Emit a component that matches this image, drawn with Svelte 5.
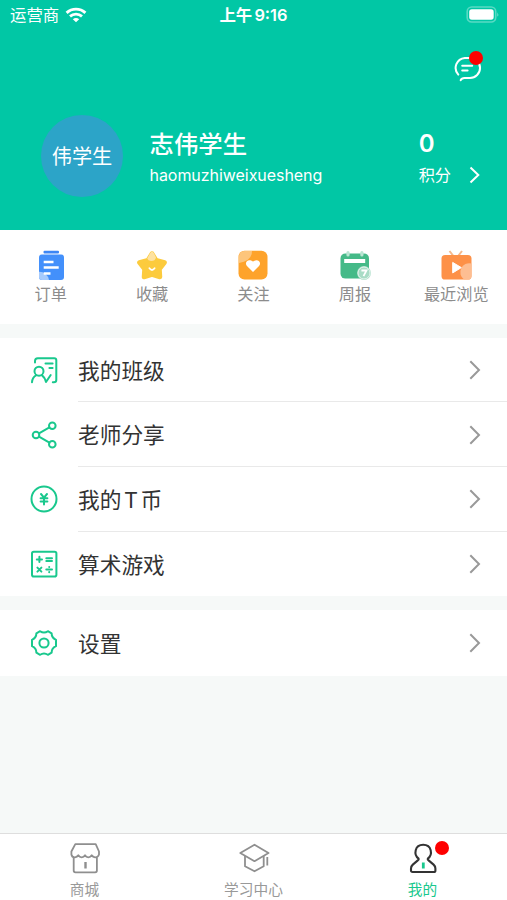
<script lang="ts">
  type Row = { id: string; label: string };

  const shortcuts: Row[] = [
    { id: 'order', label: '订单' },
    { id: 'star', label: '收藏' },
    { id: 'follow', label: '关注' },
    { id: 'weekly', label: '周报' },
    { id: 'recent', label: '最近浏览' },
  ];

  const groups: Row[][] = [
    [
      { id: 'class', label: '我的班级' },
      { id: 'share', label: '老师分享' },
      { id: 'coin', label: '我的 T 币' },
      { id: 'game', label: '算术游戏' },
    ],
    [{ id: 'settings', label: '设置' }],
  ];

  const tabs: Row[] = [
    { id: 'shop', label: '商城' },
    { id: 'study', label: '学习中心' },
    { id: 'me', label: '我的' },
  ];

  let activeTab = $state('me');
</script>

<div class="app">
  <header class="header">
    <div class="status">
      <div class="carrier">
        <span>运营商</span>
        <svg width="22" height="16" viewBox="0 0 22 16" fill="none" stroke="#fff" stroke-width="2.9">
          <path d="M1.6 5.9C6.9 .9 15.1 .9 20.4 5.9" />
          <path d="M5 9.4C8.4 6.4 13.6 6.4 17 9.4" />
          <path d="M11 15.2L7.8 12.2C9.6 10.6 12.4 10.6 14.2 12.2Z" fill="#fff" stroke="none" />
        </svg>
      </div>
      <div class="time">上午 9:16</div>
      <svg class="battery" width="34" height="17" viewBox="0 0 34 17">
        <rect x="1.2" y="1" width="28.5" height="15" rx="4.5" fill="none" stroke="#fff" stroke-opacity=".35" stroke-width="1.6" />
        <rect x="3.2" y="3.3" width="24.5" height="10.4" rx="2.6" fill="#fff" />
        <path d="M31.4 6.2Q33.2 8.5 31.4 10.8Z" fill="#fff" fill-opacity=".5" />
      </svg>
    </div>

    <button class="message" aria-label="消息">
      <svg width="30" height="28" viewBox="0 0 30 28" fill="none" stroke="#fff" stroke-width="2" stroke-linecap="round">
        <path d="M5.3 20.6A10 10 0 0 1 11.8 3.9H17A10 10 0 0 1 17 24H11.5Q8.6 24 7.7 26.2" />
        <path d="M9.2 11.7H19.2M9.2 16.6H14.6" />
      </svg>
      <i class="dot"></i>
    </button>

    <div class="profile">
      <div class="avatar">伟学生</div>
      <div class="who">
        <h1>志伟学生</h1>
        <p>haomuzhiweixuesheng</p>
      </div>
      <div class="points">
        <strong>0</strong>
        <span>积分</span>
      </div>
      <svg class="go" width="12" height="18" viewBox="0 0 12 18" fill="none" stroke="#fff" stroke-width="2">
        <path d="M1.5 1.5L9.3 9L1.5 16.5" />
      </svg>
    </div>
  </header>

  <nav class="shortcuts">
    {#each shortcuts as item}
      <button class="shortcut">
        <svg width="32" height="30" viewBox="0 0 32 30">
          {#if item.id === 'order'}
            <rect x="8.5" y=".7" width="15.5" height="2.8" rx="1" fill="#3c86f5" />
            <rect x="4" y="4.6" width="25" height="25.4" rx="3" fill="#4390fb" />
            <path d="M4 21.8A9.8 9.8 0 0 1 14 30H7Q4 30 4 27Z" fill="#a7cbfd" />
            <path d="M8.7 12H18.5M8.7 17.6H23.7M8.7 23.4H15.5" stroke="#fff" stroke-width="2.5" />
          {:else if item.id === 'star'}
            <path d="M16 3.5L20.2 10.2L28.6 12.5L23.5 19L24 27L16 24.5L8 27L8.5 19L3.4 12.5L11.8 10.2Z" fill="#fccb3d" stroke="#fccb3d" stroke-width="4.5" stroke-linejoin="round" />
            <path d="M11.2 8.6L14.1 3.2Q16 .4 17.9 3.2L20 7.5Q19 11.2 15 11Q12 10.9 11.2 8.6Z" fill="#fee2a0" />
            <path d="M13.4 18.3Q16 21.7 18.6 18.3" fill="none" stroke="#fff" stroke-width="1.8" stroke-linecap="round" />
          {:else if item.id === 'follow'}
            <rect x="1.5" y=".7" width="29" height="28.8" rx="6" fill="#fea32b" />
            <path d="M2 13V7Q2 1 8 1H15Q15 11 2 13Z" fill="#fdc57b" />
            <path d="M16 22L10.2 16.3C6.8 12.8 11 7.6 16 11.6C21 7.6 25.2 12.8 21.8 16.3Z" fill="#fff" />
          {:else if item.id === 'weekly'}
            <rect x="1.5" y="3.4" width="28.5" height="25.2" rx="5" fill="#45ba88" />
            <rect x="5.2" y="9" width="21" height="4" fill="#fff" />
            <path d="M9 2.6V5M22.9 2.6V5" stroke="#b9e5d2" stroke-width="3.2" stroke-linecap="round" />
            <circle cx="25" cy="23" r="6.9" fill="#a9dcc6" />
            <circle cx="25" cy="23" r="6" fill="none" stroke="#e5f5ee" stroke-width="1" />
            <path d="M22.4 20.5H27.5L24.5 26.2" fill="none" stroke="#fff" stroke-width="1.8" />
          {:else}
            <path d="M9.5 1L13 5.5M22 1L18.5 5.5" stroke="#f5b98b" stroke-width="2" />
            <rect x="1.5" y="5" width="30" height="24.5" rx="3.6" fill="#fd9148" />
            <path d="M31.5 13.5A9 9 0 0 0 24 29.5H28Q31.5 29.5 31.5 26Z" fill="#fdbe92" />
            <path d="M12.7 12.4V22.9L21.3 17.6Z" fill="#fff" stroke="#fff" stroke-linejoin="round" />
          {/if}
        </svg>
        <span>{item.label}</span>
      </button>
    {/each}
  </nav>

  {#each groups as group}
    <ul class="group">
      {#each group as item}
        <li class="row">
          <svg class="icon" width="28" height="28" viewBox="0 0 28 28" fill="none" stroke="#19c88d" stroke-width="2" stroke-linecap="round" stroke-linejoin="round">
            {#if item.id === 'class'}
              <path d="M5 6.6V5Q5 2.2 7.8 2.2H24.3Q26.3 2.2 26.3 4.2V24Q26.3 26.3 23.8 26.3H22.8" />
              <path d="M15.5 7.4H22.6M19.4 12H22.6" />
              <circle cx="9" cy="15.2" r="4.5" />
              <path d="M2 26.3Q2.2 21.5 6 19.3M12 19.3Q14.6 21 16 26L20.7 19" />
            {:else if item.id === 'share'}
              <circle cx="6" cy="14" r="3.3" />
              <circle cx="22.3" cy="4.8" r="3.3" />
              <circle cx="22.3" cy="23.3" r="3.3" />
              <path d="M9 12.3L19.4 6.4M9 15.7L19.4 21.7" />
            {:else if item.id === 'coin'}
              <circle cx="14" cy="14" r="12.5" />
              <path d="M11 9L14 12.7L17 9M10.6 13.3H17.4M10.6 16.5H17.4M14 12.7V19.5" />
            {:else if item.id === 'game'}
              <rect x="2" y="1.8" width="24.4" height="24.8" rx="1.8" />
              <path d="M6.8 9.4H12M9.4 6.8V12M16.3 8.2H22M16.3 11H22M7.4 17.6L11.4 21.6M11.4 17.6L7.4 21.6M16.3 19.6H22" />
              <path d="M19.2 17V17.1M19.2 22.1V22.2" />
            {:else}
              <path d="M10.1 2.2Q14 4.9 17.9 2.2L21.6 4.3Q21.6 8.9 26 10.8V17.2Q21.6 19.1 21.6 23.7L17.9 25.8Q14 23.1 10.1 25.8L6.4 23.7Q6.4 19.1 2 17.2V10.8Q6.4 8.9 6.4 4.3Z" />
              <circle cx="14" cy="14" r="4.6" />
            {/if}
          </svg>
          <div class="cell">
            <span>{item.label}</span>
            <svg width="12" height="20" viewBox="0 0 12 20" fill="none" stroke="#999" stroke-width="2">
              <path d="M1.3 1.2L10 10L1.3 18.8" />
            </svg>
          </div>
        </li>
      {/each}
    </ul>
  {/each}

  <nav class="tabbar">
    {#each tabs as tab}
      <button class="tab" class:active={activeTab === tab.id} onclick={() => (activeTab = tab.id)}>
        <svg width="32" height="32" viewBox="0 0 32 32" fill="none" stroke="#8f8f8f" stroke-width="1.8" stroke-linejoin="round">
          {#if tab.id === 'shop'}
            <path d="M6.3 2.2H26.7L30 9.5V12.5Q29 15.5 26 15.3Q23.8 15.2 22.7 13.3Q21.5 15.3 19.3 15.3Q17.2 15.3 16 13.3Q14.8 15.3 12.7 15.3Q10.5 15.3 9.3 13.3Q8.2 15.2 6 15.3Q3 15.5 2.4 12.5V9.5Z" />
            <path d="M4.7 15.3V28.6Q4.7 30.3 6.4 30.3H26.2Q27.9 30.3 27.9 28.6V15.3" />
            <path d="M16.5 20V26.5" stroke-width="2.4" />
          {:else if tab.id === 'study'}
            <path d="M16.5 2.7L30.5 11L16.5 19.2L2.3 11Z" />
            <path d="M7 14V24.2L16.5 29.3L25.7 24.2V14M29.3 15V23.5" />
          {:else}
            <g stroke="#333" stroke-width="2.1">
              <path d="M11.6 16.6C6.4 12.6 7.6 2.7 16.2 2.7C24.8 2.7 26 12.6 20.8 16.6Q20.4 17.6 21.6 18.4L26.6 22.6Q28.4 24.2 28.4 26.5V28.4Q28.4 30 26.8 30H5.6Q4 30 4 28.4V26.5Q4 24.2 5.8 22.6L10.8 18.4Q12 17.6 11.6 16.6Z" />
            </g>
            <path d="M16.3 20.5V26.5" stroke="#19c88d" stroke-width="2.8" />
          {/if}
        </svg>
        <span>{tab.label}</span>
        {#if tab.id === 'me'}
          <i class="dot"></i>
        {/if}
      </button>
    {/each}
  </nav>
</div>

<style>
  :global(body) {
    background: #f6f9f8;
  }

  .app {
    display: flex;
    flex-direction: column;
    height: 900px;
    overflow: hidden;
    font-family: Inter, 'Noto Sans CJK SC', sans-serif;
    color: #333;
  }

  button {
    border: 0;
    padding: 0;
    background: none;
    font: inherit;
    color: inherit;
    cursor: pointer;
  }

  svg {
    display: block;
    flex: none;
  }

  .header {
    height: 230px;
    flex: none;
    display: flex;
    flex-direction: column;
    background: #01c7a5;
    color: #fff;
  }

  .status {
    display: grid;
    grid-template-columns: 1fr auto 1fr;
    align-items: center;
    height: 30px;
    padding: 0 7px 0 10px;
    font-size: 16.4px;
    line-height: 30px;
  }

  .carrier {
    display: flex;
    align-items: center;
    gap: 6px;
  }

  .time {
    font-weight: 600;
    word-spacing: -2px;
    margin-right: 3px;
  }

  .battery {
    justify-self: end;
    margin-top: -2px;
  }

  .message {
    position: relative;
    align-self: flex-end;
    margin: 24px 24px 0 0;
  }

  .dot {
    position: absolute;
    width: 14px;
    height: 14px;
    border-radius: 50%;
    background: #fe0000;
  }

  .message .dot {
    top: -3px;
    right: 0;
  }

  .profile {
    display: flex;
    align-items: center;
    margin-top: 33px;
    padding: 0 26px 0 41px;
  }

  .avatar {
    width: 82px;
    height: 82px;
    flex: none;
    border-radius: 50%;
    background: #2ca4c8;
    font-size: 20.2px;
    line-height: 84px;
    text-align: center;
  }

  .who {
    flex: 1;
    margin-left: 26.5px;
    padding-top: 3px;
  }

  h1,
  p {
    margin: 0;
  }

  h1 {
    font-size: 24.4px;
    font-weight: 500;
    line-height: 34px;
  }

  p {
    font-size: 16px;
    line-height: 28px;
    letter-spacing: -0.05px;
  }

  .points {
    display: flex;
    flex-direction: column;
    padding-top: 3px;
    font-size: 16.2px;
    line-height: 28px;
  }

  .points strong {
    font-size: 24px;
    font-weight: 600;
    line-height: 34px;
  }

  .go {
    margin: 38px 0 0 18px;
  }

  .shortcuts {
    display: grid;
    grid-template-columns: repeat(5, 1fr);
    height: 94px;
    flex: none;
    background: #fff;
  }

  .shortcut {
    display: flex;
    flex-direction: column;
    align-items: center;
    padding-top: 20px;
    font-size: 16.2px;
    line-height: 28px;
    color: #8c8c8c;
    white-space: nowrap;
  }

  .group {
    margin: 13.7px 0 0;
    padding: 0;
    list-style: none;
    background: #fff;
  }

  .row {
    display: flex;
    align-items: center;
    height: 64.7px;
    padding-left: 30px;
  }

  .row:only-child {
    height: 66px;
  }

  .cell {
    display: flex;
    flex: 1;
    align-items: center;
    justify-content: space-between;
    align-self: stretch;
    box-sizing: border-box;
    margin-left: 20px;
    padding: 1px 26px 0 0;
    border-bottom: 1px solid #e9e9e9;
    font-size: 21.7px;
    word-spacing: -3.5px;
  }

  .row:last-child .cell {
    border-bottom-color: transparent;
  }

  .cell span {
    margin-top: -2px;
  }

  .tabbar {
    display: grid;
    grid-template-columns: repeat(3, 1fr);
    height: 67px;
    box-sizing: border-box;
    flex: none;
    margin-top: auto;
    border-top: 1.5px solid #dedede;
    background: #fff;
  }

  .tab {
    position: relative;
    display: flex;
    flex-direction: column;
    align-items: center;
    padding-top: 8px;
    font-size: 14.7px;
    line-height: 32px;
    color: #999;
  }

  .tab.active {
    color: #19c88d;
  }

  .tab .dot {
    top: 6.5px;
    left: calc(50% + 12.5px);
  }
</style>
